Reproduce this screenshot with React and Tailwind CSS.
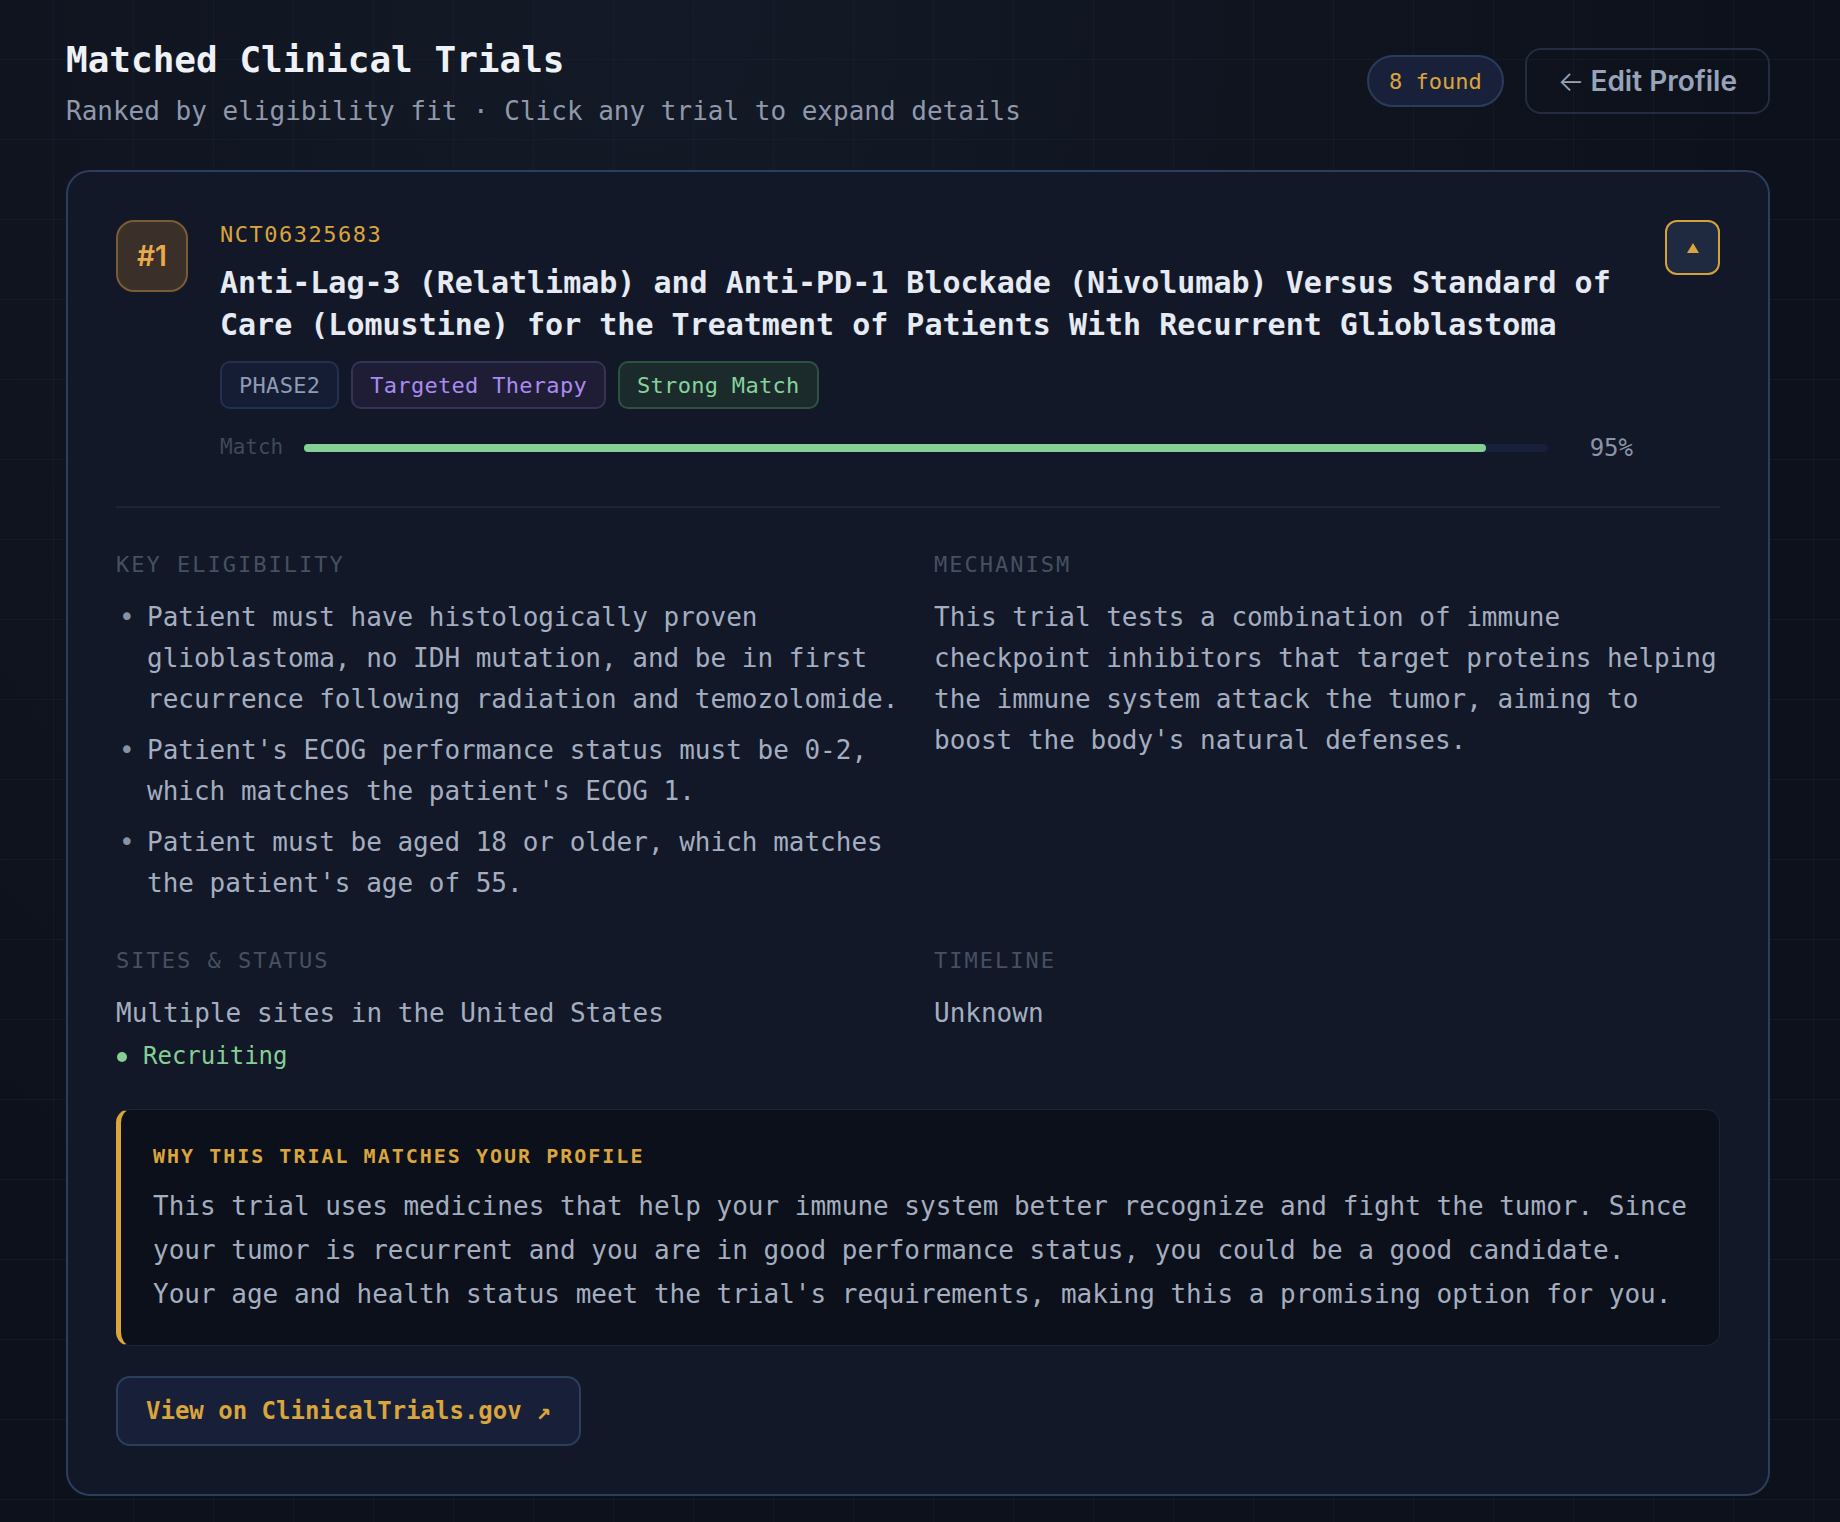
import React from 'react';

const mono = "font-['DejaVu_Sans_Mono','Liberation_Mono',monospace]";
const sans = "font-['Inter','Noto_Sans',sans-serif]";

const eligibility = [
  "Patient must have histologically proven glioblastoma, no IDH mutation, and be in first recurrence following radiation and temozolomide.",
  "Patient's ECOG performance status must be 0-2, which matches the patient's ECOG 1.",
  "Patient must be aged 18 or older, which matches the patient's age of 55.",
];

function SectionLabel({ children }) {
  return (
    <div className={`${mono} text-[22px] leading-[33px] tracking-[2px] text-[#465063] mb-4`}>
      {children}
    </div>
  );
}

function Tag({ children, className }) {
  return (
    <span className={`${mono} h-[48px] px-[17px] flex items-center rounded-[10px] border-2 text-[22px] tracking-[0.3px] ${className}`}>
      {children}
    </span>
  );
}

export default function App() {
  const score = 95;

  return (
    <div className="min-h-screen bg-[#0d111b] bg-[linear-gradient(rgba(100,116,139,0.07)_1px,transparent_1px),linear-gradient(90deg,rgba(100,116,139,0.07)_1px,transparent_1px)] [background-size:80px_80px] [background-position:53px_59px]">
      <div className="min-h-[1522px] bg-[radial-gradient(ellipse_at_35%_0%,rgba(30,41,59,0.35),transparent_65%)] pl-[66px] pr-[70px] pt-[38px] pb-[27px]">
        {/* Page header */}
        <div className="flex justify-between items-center mb-[39px]">
          <div>
            <h1 className={`${mono} text-[36px] leading-[43px] font-bold text-[#eef1f6]`}>Matched Clinical Trials</h1>
            <p className={`${mono} mt-[11px] text-[26px] leading-[39px] text-[#8f99ab]`}>
              Ranked by eligibility fit · Click any trial to expand details
            </p>
          </div>
          <div className="flex items-center gap-[21px] mb-[7px]">
            <span className={`${mono} h-[52px] px-[20px] flex items-center rounded-full border-2 border-[#2b3b5c] bg-[#19213a] text-[22px] text-[#d9a53c]`}>
              8 found
            </span>
            <button className={`${sans} h-[66px] px-[31px] flex items-center rounded-[16px] border-2 border-[#222d40] text-[28px] font-semibold text-[#97a3b8]`}>
              <span className="font-light mr-[6px]">←</span>Edit Profile
            </button>
          </div>
        </div>

        {/* Trial card */}
        <div className="rounded-[24px] border-2 border-[#2b3e5c] bg-[#121827] p-[48px]">
          <div className="flex gap-8 pb-[43px]">
            <div className={`${sans} w-[72px] h-[72px] shrink-0 rounded-[18px] border-2 border-[#7b5b36] bg-[#3a3029] flex items-center justify-center text-[28px] font-semibold text-[#e8aa4c]`}>
              #1
            </div>
            <div className="flex-1 min-w-0">
              <div className={`${mono} text-[22px] leading-[30px] tracking-[1.5px] text-[#d9a53c]`}>NCT06325683</div>
              <h2 className={`${mono} mt-[12px] text-[30px] leading-[42px] font-bold text-[#e6eaf2]`}>
                Anti-Lag-3 (Relatlimab) and Anti-PD-1 Blockade (Nivolumab) Versus Standard of Care (Lomustine) for the Treatment of Patients With Recurrent Glioblastoma
              </h2>
              <div className="flex gap-3 mt-[15px]">
                <Tag className="bg-[#141d33] border-[#22314e] text-[#8e9bb3]">PHASE2</Tag>
                <Tag className="bg-[#1f1d35] border-[#383255] text-[#a98bf0]">Targeted Therapy</Tag>
                <Tag className="bg-[#1b2b2c] border-[#2d5340] text-[#86d29b]">Strong Match</Tag>
              </div>
              <div className="flex items-center gap-[21px] mt-[24px] h-[30px]">
                <span className={`${mono} text-[21px] text-[#3f495c]`}>Match</span>
                <div className="flex-1 h-[8px] rounded-full bg-[#19213a]">
                  <div className="h-full rounded-full bg-[#86cf94]" style={{ width: `${score}%` }} />
                </div>
                <span className={`${mono} w-[64px] text-right text-[24px] text-[#8a94a6]`}>{score}%</span>
              </div>
            </div>
            <button className="w-[55px] h-[55px] shrink-0 rounded-[12px] border-2 border-[#d4a23a] bg-[#1f2a40] flex items-center justify-center">
              <svg width="12" height="10" viewBox="0 0 12 10">
                <polygon points="6,0 12,10 0,10" fill="#d9a53c" />
              </svg>
            </button>
          </div>

          <div className="h-[2px] bg-[#1c2536]" />

          {/* Detail grid */}
          <div className="grid grid-cols-[786px_786px] gap-x-8 gap-y-10 mt-10">
            <div>
              <SectionLabel>KEY ELIGIBILITY</SectionLabel>
              <ul className="space-y-[10px]">
                {eligibility.map((item, i) => (
                  <li key={i} className={`${mono} flex text-[26px] leading-[41px] text-[#a4aec0]`}>
                    <span className="w-[31px] shrink-0 pl-[3px] text-[#8792a6]">•</span>
                    <span>{item}</span>
                  </li>
                ))}
              </ul>
            </div>
            <div>
              <SectionLabel>MECHANISM</SectionLabel>
              <p className={`${mono} text-[26px] leading-[41px] text-[#a4aec0]`}>
                This trial tests a combination of immune checkpoint inhibitors that target proteins helping the immune system attack the tumor, aiming to boost the body's natural defenses.
              </p>
            </div>
            <div>
              <SectionLabel>SITES &amp; STATUS</SectionLabel>
              <p className={`${mono} text-[26px] leading-[41px] text-[#a4aec0]`}>Multiple sites in the United States</p>
              <div className={`${mono} mt-[2px] flex items-center gap-[16px] text-[24px] leading-[41px] text-[#86cf94]`}>
                <span className="w-[10px] h-[10px] ml-[1px] rounded-full bg-[#86cf94]" />
                Recruiting
              </div>
            </div>
            <div>
              <SectionLabel>TIMELINE</SectionLabel>
              <p className={`${mono} text-[26px] leading-[41px] text-[#a4aec0]`}>Unknown</p>
            </div>
          </div>

          {/* Why box */}
          <div className="mt-8 rounded-[14px] border border-[#1c2536] border-l-[5px] border-l-[#d9a53c] bg-[#0c101a] pl-8 pr-6 pt-[31px] pb-[29px]">
            <div className={`${mono} mb-[13px] text-[20px] leading-[30px] font-bold tracking-[2px] text-[#d9a53c]`}>
              WHY THIS TRIAL MATCHES YOUR PROFILE
            </div>
            <p className={`${mono} text-[26px] leading-[44px] text-[#a4aec0]`}>
              This trial uses medicines that help your immune system better recognize and fight the tumor. Since your tumor is recurrent and you are in good performance status, you could be a good candidate. Your age and health status meet the trial's requirements, making this a promising option for you.
            </p>
          </div>

          <button className={`${mono} mt-[30px] h-[70px] px-[28px] flex items-center rounded-[14px] border-2 border-[#2b3e5c] bg-[#172038] text-[24px] font-bold text-[#d9a53c]`}>
            View on ClinicalTrials.gov ↗
          </button>
        </div>
      </div>
    </div>
  );
}
